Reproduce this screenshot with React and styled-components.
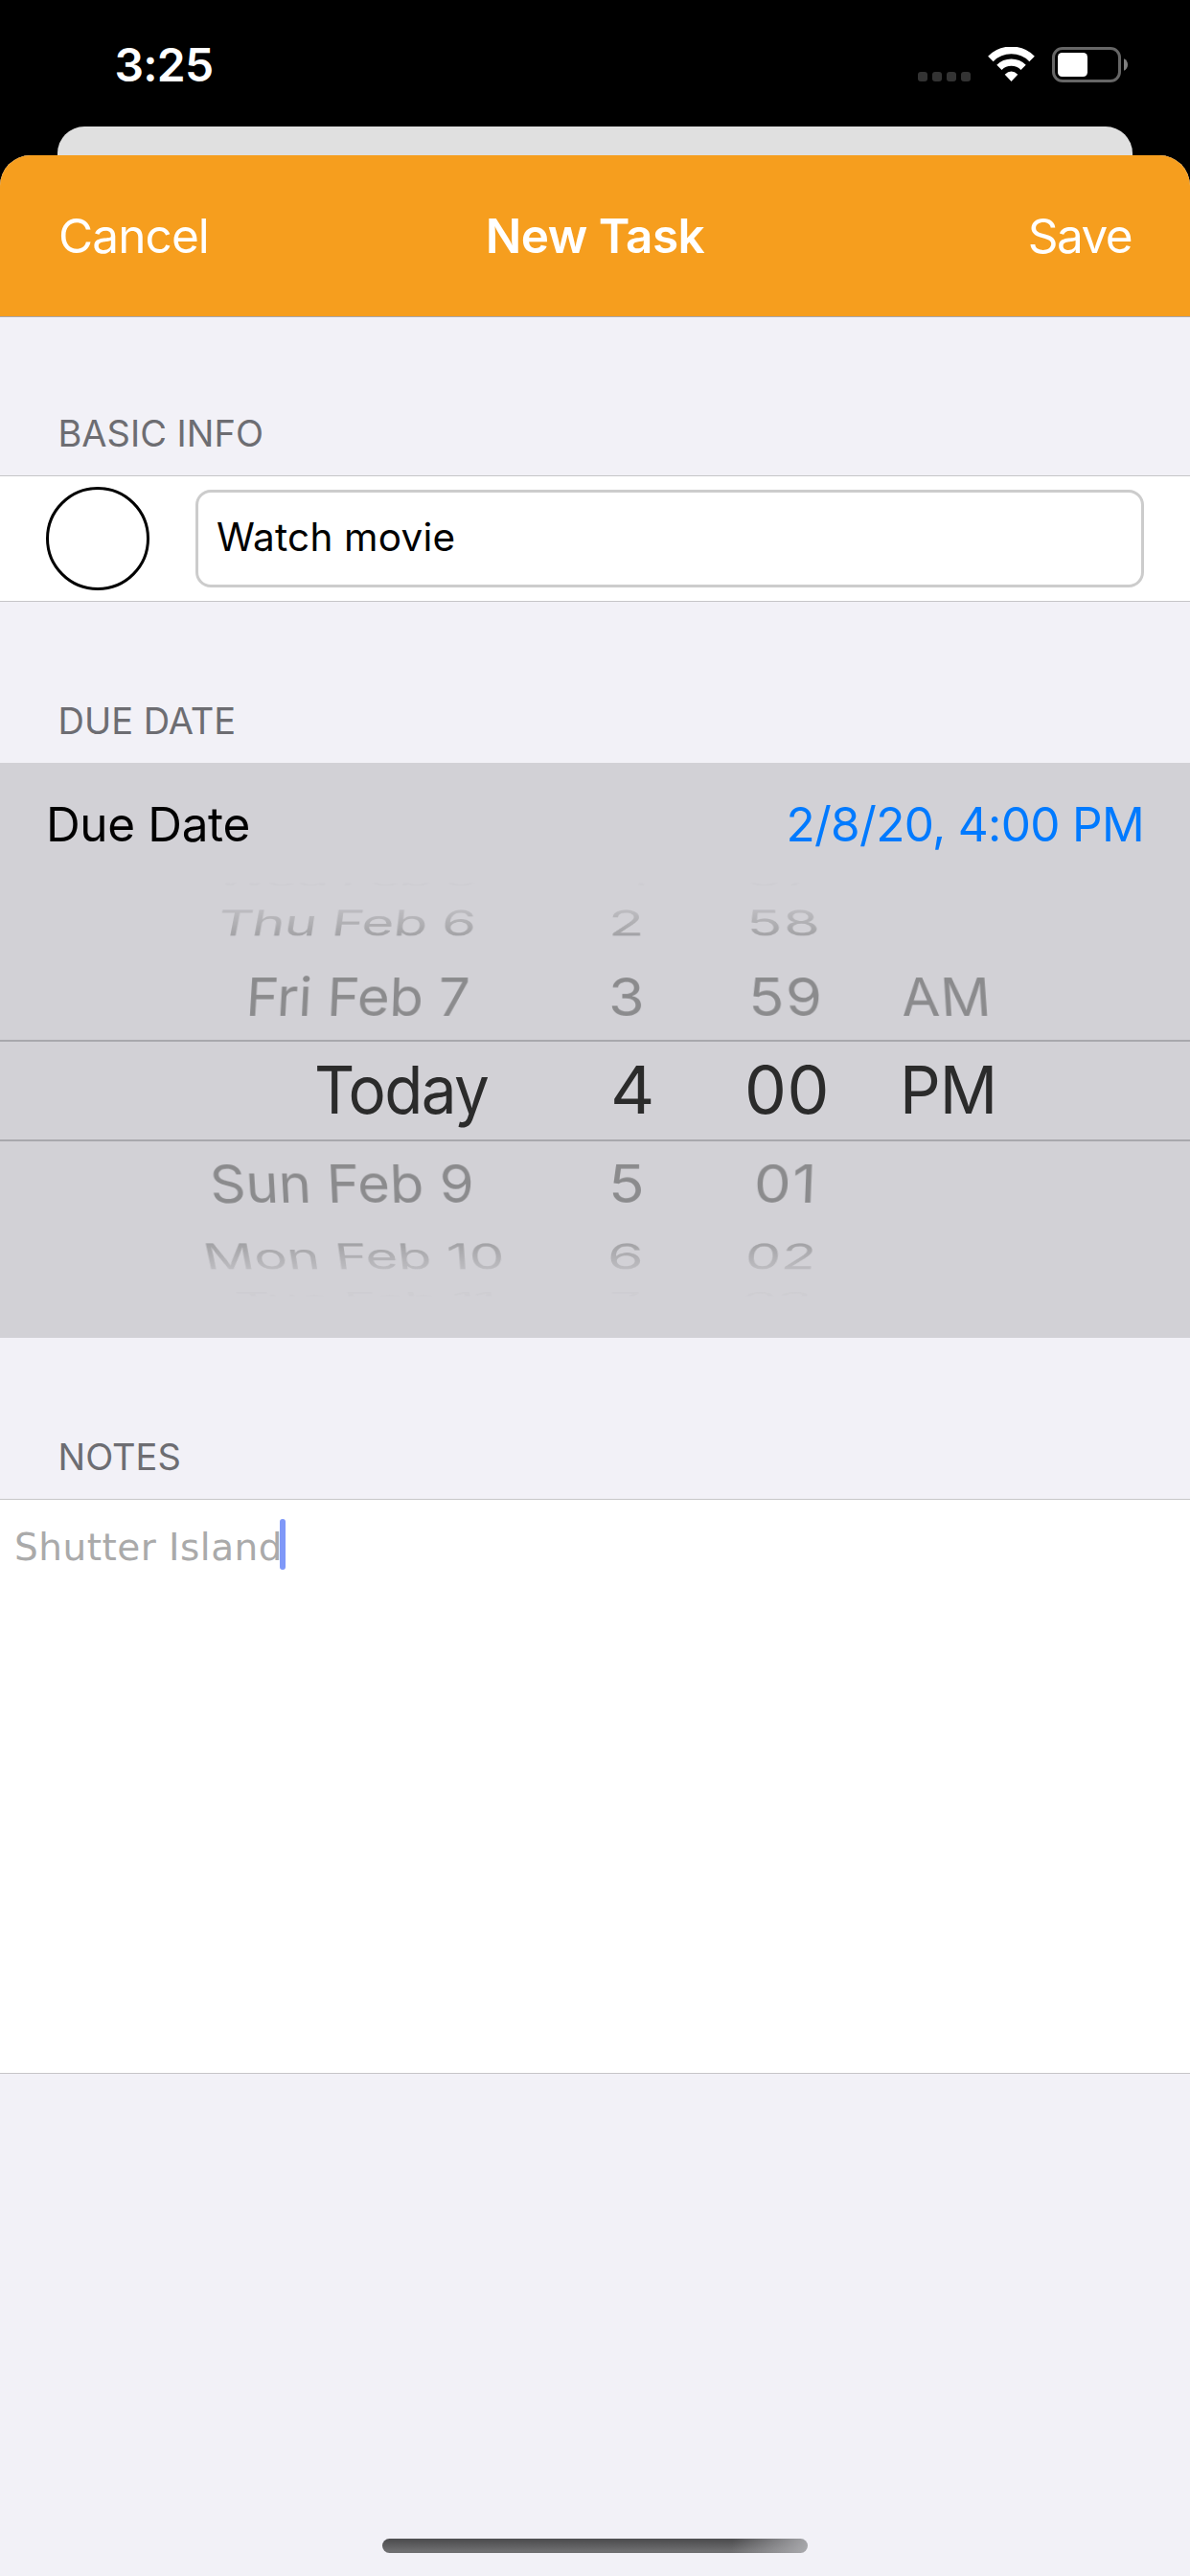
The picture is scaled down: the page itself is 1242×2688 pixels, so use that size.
import React from "react";
import styled, { createGlobalStyle } from "styled-components";

const GlobalStyle = createGlobalStyle`
  *, *::before, *::after { box-sizing: border-box; }
  html, body { margin: 0; padding: 0; background: #000; }
  body { font-family: Inter, "Liberation Sans", sans-serif; color: #000; }
`;

const Screen = styled.div`
  width: 1242px;
  height: 2688px;
  display: flex;
  flex-direction: column;
  background: #000;
  overflow: hidden;
  white-space: nowrap;
`;

const StatusBar = styled.div`
  height: 132px;
  padding: 3px 65px 0 119.6px;
  display: flex;
  align-items: center;
  justify-content: space-between;
  flex: none;
`;

const Time = styled.span`
  color: #fff;
  font-size: 48px;
  font-weight: 600;
  letter-spacing: -0.8px;
`;

const StatusIcons = styled.div`
  display: flex;
  align-items: flex-end;
  height: 37px;
`;

const SignalDots = styled.div`
  display: flex;
  gap: 5px;
  margin: 0 18px 1px 0;
`;

const Dot = styled.i`
  width: 10px;
  height: 10px;
  border-radius: 3px;
  background: #333;
`;

const WifiIcon = styled.svg`
  display: block;
  width: 49px;
  height: 37px;
  margin-right: 18px;
`;

const BatteryIcon = styled.svg`
  display: block;
  width: 79px;
  height: 37px;
`;

const BackCard = styled.div`
  flex: none;
  height: 30px;
  margin: 0 60px;
  border-radius: 28px 28px 0 0;
  background: #e0e0e0;
`;

const Sheet = styled.div`
  flex: 1;
  display: flex;
  flex-direction: column;
  border-radius: 32px 32px 0 0;
  background: #f2f1f7;
  overflow: hidden;
`;

const NavBar = styled.header`
  flex: none;
  height: 169px;
  padding: 0 61px;
  display: grid;
  grid-template-columns: 1fr auto 1fr;
  align-items: center;
  background: #f69e1e;
  border-bottom: 1px solid #a8a7ac;
  color: #fff;
  font-size: 49.5px;
`;

const NavButton = styled.span`
  justify-self: ${(p) => p.$side};
  letter-spacing: ${(p) => p.$tracking}px;
`;

const NavTitle = styled.span`
  font-weight: 600;
  letter-spacing: -0.57px;
`;

const SectionTitle = styled.h2`
  flex: none;
  height: ${(p) => p.$height}px;
  margin: 0;
  padding: 0 60.5px 21px;
  display: flex;
  align-items: flex-end;
  font-size: 38px;
  line-height: 46px;
  font-weight: 400;
  color: #6d6d72;
`;

const TaskRow = styled.div`
  flex: none;
  height: 132px;
  padding: 0 48px;
  display: flex;
  align-items: center;
  gap: 48px;
  background: #fff;
  border-top: 1px solid #c6c6c8;
  border-bottom: 1px solid #c6c6c8;
`;

const Check = styled.div`
  flex: none;
  width: 108px;
  height: 108px;
  border: 3px solid #000;
  border-radius: 50%;
`;

const Field = styled.div`
  flex: 1;
  height: 102px;
  padding: 0 19px 3px;
  display: flex;
  align-items: center;
  border: 3px solid #ccc;
  border-radius: 16px;
  font-size: 40.5px;
  letter-spacing: 0.2px;
`;

const DuePanel = styled.div`
  flex: none;
  height: 600px;
  background: #d2d1d6;
`;

const DueHeader = styled.div`
  height: 110px;
  padding: 18px 48px 0;
  display: flex;
  align-items: center;
  justify-content: space-between;
  font-size: 49.5px;
`;

const DueLabel = styled.span`
  letter-spacing: -0.37px;
`;

const DueValue = styled.span`
  color: #007aff;
  letter-spacing: -0.68px;
`;

const Wheel = styled.div`
  height: 460px;
  display: flex;
  flex-direction: column;
  mask-image: linear-gradient(
    to bottom,
    transparent 15px,
    rgba(0, 0, 0, 0.04) 16px,
    rgba(0, 0, 0, 0.06) 22px,
    rgba(0, 0, 0, 0.29) 44px,
    rgba(0, 0, 0, 0.67) 71px,
    #000 92px,
    #000 calc(100% - 90px),
    rgba(0, 0, 0, 0.67) calc(100% - 69px),
    rgba(0, 0, 0, 0.29) calc(100% - 42px),
    rgba(0, 0, 0, 0.06) calc(100% - 20px),
    rgba(0, 0, 0, 0.04) calc(100% - 14px),
    transparent calc(100% - 13px)
  );
`;

const wheelColumns = (s) =>
  s.slice(1).map((x, i) => `${x - s[i]}px`).join(" ") + " 1fr";

const WheelRow = styled.div`
  flex: none;
  height: ${(p) => p.$height}px;
  padding-left: ${(p) => p.$starts[0]}px;
  display: grid;
  grid-template-columns: ${(p) => wheelColumns(p.$starts)};
  grid-template-rows: 100%;
  align-items: center;
  font-size: 58px;
  line-height: 1;
  color: #8b8b8d;
  transform: perspective(${(p) => p.$depth}px) rotateX(${(p) => p.$tilt}deg);
`;

const SelectedRow = styled(WheelRow)`
  border-top: 2px solid #a8a8ad;
  border-bottom: 2px solid #a8a8ad;
  padding-bottom: 2px;
  font-size: 69px;
  color: #2b2b2b;
  transform: none;
`;

const WheelCell = styled.span`
  align-self: center;
  justify-self: start;
  height: 1em;
  margin: -1em 0;
  letter-spacing: ${(p) => p.$tracking}px;
  transform: scaleX(${(p) => p.$stretch});
  transform-origin: left center;
`;

const NotesArea = styled.div`
  flex: none;
  height: 600px;
  padding: 20px 15px;
  display: flex;
  align-items: flex-start;
  background: #fff;
  border-top: 1px solid #c6c6c8;
  border-bottom: 1px solid #c6c6c8;
`;

const NotesText = styled.span`
  padding-top: 3px;
  font-family: "DejaVu Sans", sans-serif;
  font-size: 39px;
  line-height: 53px;
  letter-spacing: 0.48px;
  color: #aaa;
`;

const Caret = styled.i`
  width: 6px;
  height: 53px;
  margin-left: -3px;
  border-radius: 3px;
  background: #7f98f8;
`;

const Footer = styled.footer`
  flex: 1;
  display: flex;
  align-items: flex-end;
  justify-content: center;
  padding-bottom: 24px;
`;

const HomeIndicator = styled.div`
  width: 444px;
  height: 15px;
  border-radius: 8px;
  background:
    linear-gradient(100deg, rgba(176, 176, 180, 0) 82%, rgba(176, 176, 180, 0.9) 100%),
    linear-gradient(to bottom, #505052 15%, #6e6e70 85%);
`;

// Each cell is [text, letter spacing, horizontal stretch].
const rows = [
  { height: 24, tilt: 73, depth: 2100, starts: [227, 653, 778, 940],
    cells: [["Wed Feb 5", -2.5, 1], ["1", 0, 1], ["57", 1.5, 1.05]] },
  { height: 65, tilt: 50, depth: 2300, starts: [227, 634.5, 778.5, 940],
    cells: [["Thu Feb 6", -0.7, 1], ["2", 0, 1.05], ["58", 1.5, 1.05]] },
  { height: 90, tilt: 18, depth: 1900, starts: [257, 634.5, 781, 940.5],
    cells: [["Fri Feb 7", -0.3, 1], ["3", 0, 1.05], ["59", 1.5, 1.06], ["AM", 1, 1]] },
  { height: 106, selected: true, tilt: 0, depth: 1900, starts: [327.5, 636.5, 776.5, 938.5],
    cells: [["Today", -1.7, 0.95], ["4", 0, 1.04], ["00", 0.5, 1.01], ["PM", -1, 0.97]] },
  { height: 87, tilt: -18, depth: 1900, starts: [219, 634.5, 787, 940],
    cells: [["Sun Feb 9", 0, 1], ["5", 0, 1.07], ["01", 1.2, 1.06]] },
  { height: 66, tilt: -50, depth: 2300, starts: [212.5, 633.5, 777.5, 940],
    cells: [["Mon Feb 10", -0.2, 1], ["6", 0, 1.05], ["02", 0.5, 1.02]] },
  { height: 22, tilt: -71, depth: 2100, starts: [247, 636, 774, 940],
    cells: [["Tue Feb 11", -1.2, 1], ["7", 0, 1], ["03", 0, 1]] },
];

function Wifi() {
  return (
    <WifiIcon viewBox="0 0 49 37">
      <g fill="none" stroke="#fff">
        <path d="M2.9 12.4A30.5 30.5 0 0 1 46.1 12.4" strokeWidth="7.8" />
        <path d="M11.9 21.4A17.8 17.8 0 0 1 37.1 21.4" strokeWidth="7.4" />
      </g>
      <path d="M17.7 28.8Q24.5 22 31.3 28.8L24.5 36Z" fill="#fff" />
    </WifiIcon>
  );
}

function Battery() {
  return (
    <BatteryIcon viewBox="0 0 79 37">
      <rect x="1.5" y="1.5" width="69" height="34" rx="9.5" fill="none" stroke="#666" strokeWidth="3" />
      <rect x="6" y="6" width="31" height="25" rx="4.5" fill="#fff" />
      <path d="M75 12.2C77.6 13.3 79 15.6 79 18.5S77.6 23.7 75 24.8Z" fill="#808080" />
    </BatteryIcon>
  );
}

export default function App() {
  return (
    <>
      <GlobalStyle />
      <Screen>
        <StatusBar>
          <Time>3:25</Time>
          <StatusIcons>
            <SignalDots>
              <Dot /><Dot /><Dot /><Dot />
            </SignalDots>
            <Wifi />
            <Battery />
          </StatusIcons>
        </StatusBar>
        <BackCard />
        <Sheet>
          <NavBar>
            <NavButton $side="start" $tracking={-0.9}>Cancel</NavButton>
            <NavTitle>New Task</NavTitle>
            <NavButton $side="end" $tracking={-1.6}>Save</NavButton>
          </NavBar>

          <SectionTitle $height={165}>BASIC INFO</SectionTitle>
          <TaskRow>
            <Check />
            <Field>Watch movie</Field>
          </TaskRow>

          <SectionTitle $height={168}>DUE DATE</SectionTitle>
          <DuePanel>
            <DueHeader>
              <DueLabel>Due Date</DueLabel>
              <DueValue>2/8/20, 4:00 PM</DueValue>
            </DueHeader>
            <Wheel>
              {rows.map((row) => {
                const Row = row.selected ? SelectedRow : WheelRow;
                return (
                  <Row
                    key={row.cells[0][0]}
                    $height={row.height}
                    $tilt={row.tilt}
                    $depth={row.depth}
                    $starts={row.starts}
                  >
                    {row.cells.map(([text, tracking, stretch]) => (
                      <WheelCell key={text} $tracking={tracking} $stretch={stretch}>
                        {text}
                      </WheelCell>
                    ))}
                  </Row>
                );
              })}
            </Wheel>
          </DuePanel>

          <SectionTitle $height={168}>NOTES</SectionTitle>
          <NotesArea>
            <NotesText>Shutter Island</NotesText>
            <Caret />
          </NotesArea>

          <Footer>
            <HomeIndicator />
          </Footer>
        </Sheet>
      </Screen>
    </>
  );
}
